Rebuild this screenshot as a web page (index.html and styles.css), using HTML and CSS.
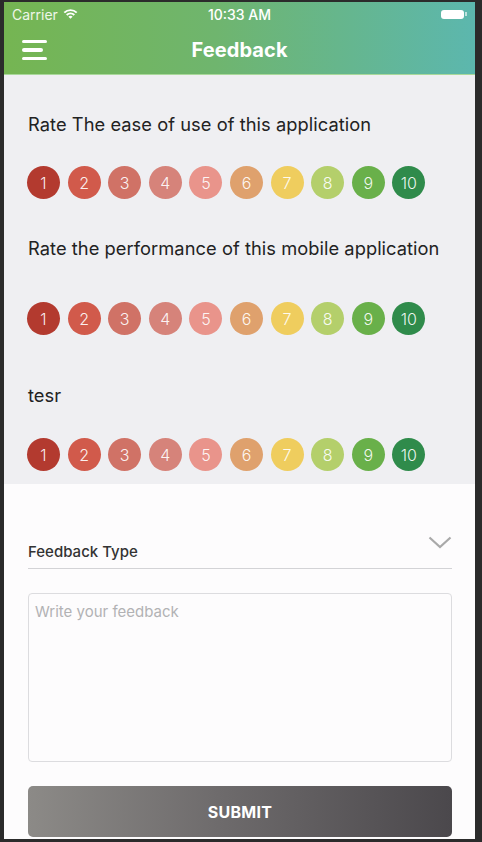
FILE: index.html
```html
<!DOCTYPE html>
<html>
<head>
<meta charset="utf-8">
<link rel="stylesheet" href="styles.css">
</head>
<body>
<div class="screen">
  <header class="header">
    <div class="status">
      <div class="status-left">
        <span>Carrier</span>
        <svg class="wifi" width="15" height="11" viewBox="0 0 15 11">
          <path d="M0.6 3.9 A10 10 0 0 1 14.4 3.9 L13 5.3 A8 8 0 0 0 2 5.3 Z" fill="#fff"/>
          <path d="M3 6.3 A6.5 6.5 0 0 1 12 6.3 L10.6 7.7 A4.5 4.5 0 0 0 4.4 7.7 Z" fill="#fff"/>
          <path d="M5.4 8.7 A3 3 0 0 1 9.6 8.7 L7.5 10.8 Z" fill="#fff"/>
        </svg>
      </div>
      <div class="status-time">10:33 AM</div>
      <div class="status-right">
        <div class="battery"></div><div class="battery-nub"></div>
      </div>
    </div>
    <div class="nav">
      <div class="burger"><span></span><span></span><span></span></div>
      <div class="title">Feedback</div>
    </div>
  </header>

  <section class="questions">
    <div class="label q1">Rate The ease of use of this application</div>
    <div class="scale s1">
      <span class="c c1">1</span><span class="c c2">2</span><span class="c c3">3</span><span class="c c4">4</span><span class="c c5">5</span><span class="c c6">6</span><span class="c c7">7</span><span class="c c8">8</span><span class="c c9">9</span><span class="c c10">10</span>
    </div>
    <div class="label q2">Rate the performance of this mobile application</div>
    <div class="scale s2">
      <span class="c c1">1</span><span class="c c2">2</span><span class="c c3">3</span><span class="c c4">4</span><span class="c c5">5</span><span class="c c6">6</span><span class="c c7">7</span><span class="c c8">8</span><span class="c c9">9</span><span class="c c10">10</span>
    </div>
    <div class="label q3">tesr</div>
    <div class="scale s3">
      <span class="c c1">1</span><span class="c c2">2</span><span class="c c3">3</span><span class="c c4">4</span><span class="c c5">5</span><span class="c c6">6</span><span class="c c7">7</span><span class="c c8">8</span><span class="c c9">9</span><span class="c c10">10</span>
    </div>
  </section>

  <section class="form">
    <div class="select">
      <span>Feedback Type</span>
      <svg class="chev" width="24" height="13" viewBox="0 0 24 13">
        <path d="M1.5 1.5 L12 11 L22.5 1.5" fill="none" stroke="#a9a9a9" stroke-width="2.2"/>
      </svg>
    </div>
    <div class="textarea">Write your feedback</div>
    <div class="submit">SUBMIT</div>
  </section>
</div>
</body>
</html>
```
FILE: styles.css
```css
html, body {
  margin: 0;
  padding: 0;
}
body {
  background: #2b2b2b;
  width: 482px;
  height: 842px;
  overflow: hidden;
  font-family: "Inter", "Roboto", sans-serif;
}
.screen {
  margin: 2px 7px 0 4px;
  width: 471px;
  height: 837px;
  background: #fdfcfd;
  display: flex;
  flex-direction: column;
  overflow: hidden;
}
.header {
  height: 72px;
  background: linear-gradient(90deg, #75b552 0%, #6fb56e 45%, #5cb7ae 100%);
  border-bottom: 1px solid #a9d89a;
  color: #fff;
  display: flex;
  flex-direction: column;
}
.status {
  height: 24px;
  display: flex;
  align-items: center;
  justify-content: space-between;
  padding: 0 8px 0 8px;
  font-size: 14px;
  position: relative;
}
.status-left {
  display: flex;
  align-items: center;
  gap: 5px;
  color: #eef6e8;
}
.wifi { margin-top: -1px; }
.status-time {
  position: absolute;
  left: 0;
  right: 0;
  text-align: center;
  font-weight: 500;
  pointer-events: none;
}
.status-right {
  display: flex;
  align-items: center;
}
.battery {
  width: 23px;
  height: 9px;
  background: #fff;
  border-radius: 3px;
}
.battery-nub {
  width: 2px;
  height: 4px;
  background: rgba(255,255,255,0.6);
  margin-left: 1px;
}
.nav {
  flex: 1;
  display: flex;
  align-items: center;
  position: relative;
  padding-left: 18px;
}
.burger {
  display: flex;
  flex-direction: column;
  gap: 5px;
  width: 25px;
}
.burger span {
  display: block;
  height: 3.5px;
  border-radius: 2px;
  background: #fff;
}
.burger span:nth-child(2) { width: 21px; }
.title {
  position: absolute;
  left: 0;
  right: 0;
  text-align: center;
  font-size: 20px;
  font-weight: 700;
  letter-spacing: 0.1px;
}
.questions {
  background: #efeff2;
  height: 409px;
  padding: 0 0 0 23px;
  display: flex;
  flex-direction: column;
}
.label {
  font-size: 18.3px;
  line-height: 24px;
  letter-spacing: 0.05px;
  color: #222;
  padding-left: 1px;
}
.q1 { margin-top: 37px; }
.q2 { margin-top: 37px; }
.q3 { margin-top: 48px; }
.scale {
  display: flex;
  gap: 7.6px;
}
.s1 { margin-top: 30px; }
.s2 { margin-top: 42px; }
.s3 { margin-top: 31px; }
.c {
  width: 33px;
  height: 33px;
  border-radius: 50%;
  display: flex;
  align-items: center;
  justify-content: center;
  color: rgba(255,255,255,0.92);
  font-size: 16px;
  font-weight: 300;
}
.c1 { background: #b33a2f; }
.c2 { background: #d15a4b; }
.c3 { background: #d07266; }
.c4 { background: #d6837a; }
.c5 { background: #e9948b; }
.c6 { background: #dfa16d; }
.c7 { background: #efcd5e; }
.c8 { background: #b4cf6b; }
.c9 { background: #69b04a; }
.c10 { background: #2f8b4b; }
.form {
  flex: 1;
  padding: 0 23px 0 24px;
  display: flex;
  flex-direction: column;
}
.select {
  margin-top: 58px;
  height: 26px;
  border-bottom: 1.5px solid #d3d3d6;
  display: flex;
  justify-content: space-between;
  align-items: flex-start;
  font-size: 15px;
  font-weight: 500;
  color: #333;
}
.select span { line-height: 20px; }
.chev { margin-top: -6px; }
.textarea {
  margin-top: 24px;
  height: 151px;
  border: 1px solid #dcdcdf;
  border-radius: 4px;
  padding: 8px 6px;
  font-size: 15px;
  color: #b2b2b4;
}
.submit {
  margin-top: 24px;
  height: 51px;
  border-radius: 5px;
  background: linear-gradient(90deg, #8c8a87 0%, #6e6b6c 45%, #4b484c 100%);
  color: #fff;
  font-weight: 700;
  font-size: 16px;
  letter-spacing: 0.3px;
  display: flex;
  align-items: center;
  justify-content: center;
}
```
